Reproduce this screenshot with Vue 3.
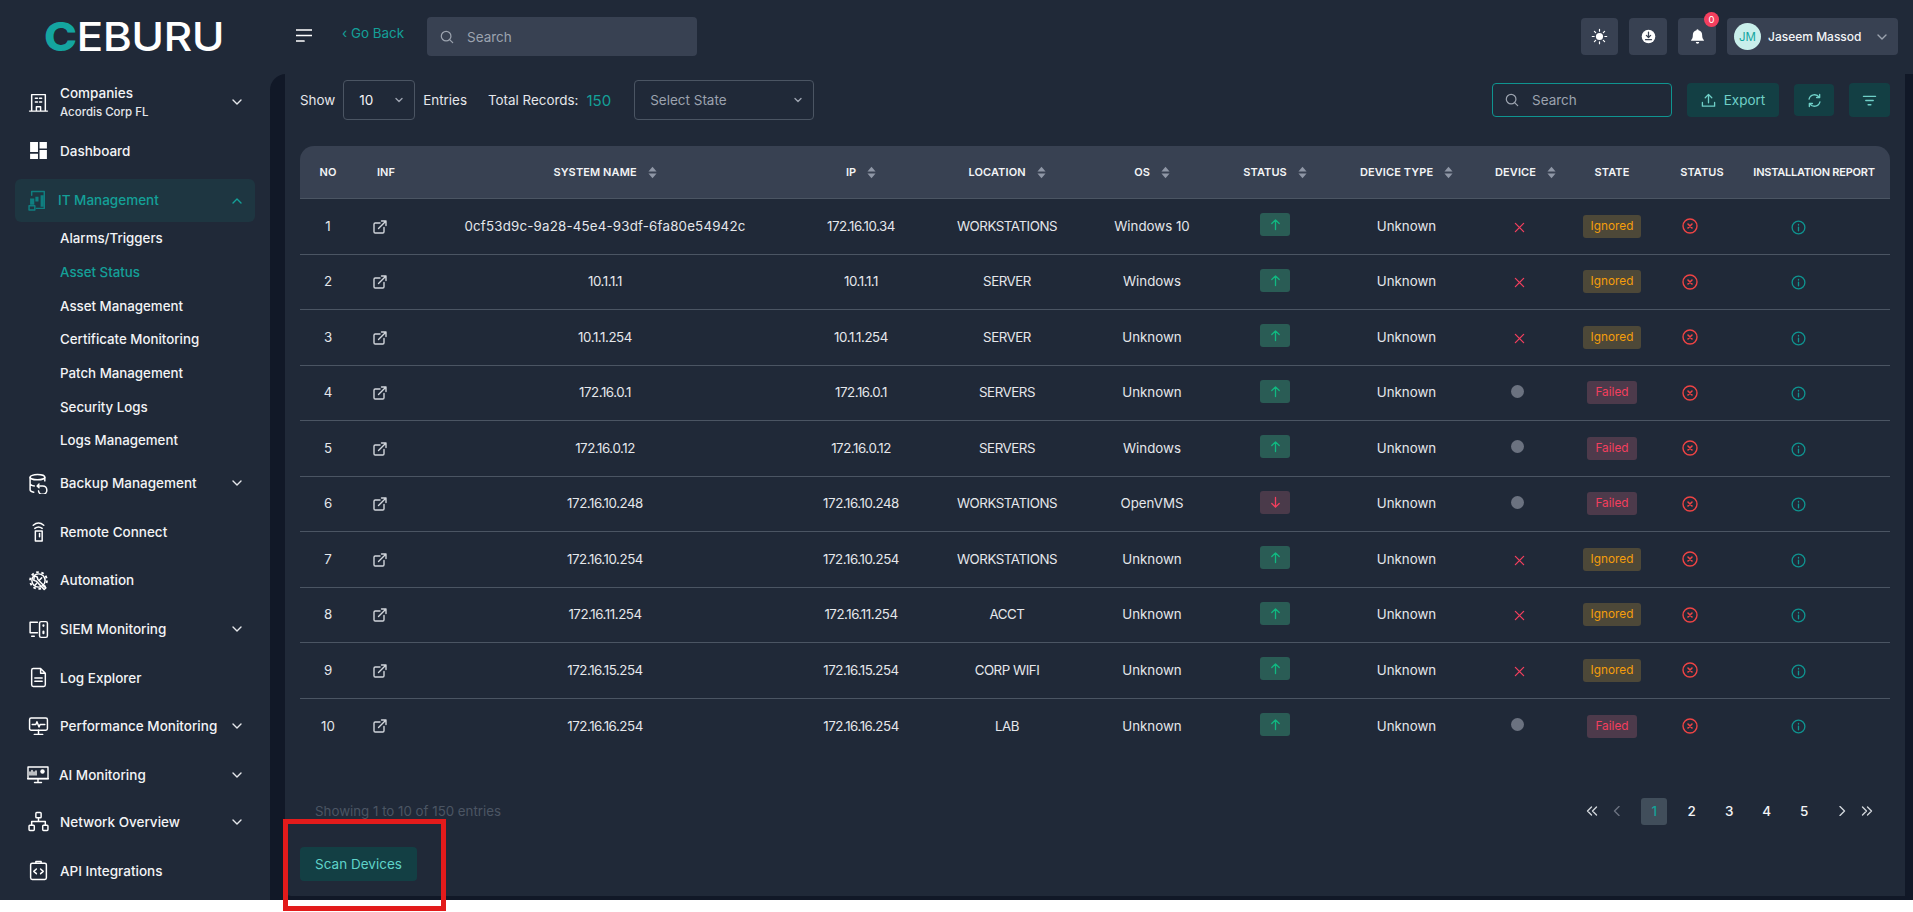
<script setup>
const subItems = ['Alarms/Triggers', 'Asset Status', 'Asset Management', 'Certificate Monitoring', 'Patch Management', 'Security Logs', 'Logs Management']
const rows = [
  { no: 1, name: '0cf53d9c-9a28-45e4-93df-6fa80e54942c', ip: '172.16.10.34', loc: 'WORKSTATIONS', os: 'Windows 10', up: true, ok: false },
  { no: 2, name: '10.1.1.1', ip: '10.1.1.1', loc: 'SERVER', os: 'Windows', up: true, ok: false },
  { no: 3, name: '10.1.1.254', ip: '10.1.1.254', loc: 'SERVER', os: 'Unknown', up: true, ok: false },
  { no: 4, name: '172.16.0.1', ip: '172.16.0.1', loc: 'SERVERS', os: 'Unknown', up: true, ok: true },
  { no: 5, name: '172.16.0.12', ip: '172.16.0.12', loc: 'SERVERS', os: 'Windows', up: true, ok: true },
  { no: 6, name: '172.16.10.248', ip: '172.16.10.248', loc: 'WORKSTATIONS', os: 'OpenVMS', up: false, ok: true },
  { no: 7, name: '172.16.10.254', ip: '172.16.10.254', loc: 'WORKSTATIONS', os: 'Unknown', up: true, ok: false },
  { no: 8, name: '172.16.11.254', ip: '172.16.11.254', loc: 'ACCT', os: 'Unknown', up: true, ok: false },
  { no: 9, name: '172.16.15.254', ip: '172.16.15.254', loc: 'CORP WIFI', os: 'Unknown', up: true, ok: false },
  { no: 10, name: '172.16.16.254', ip: '172.16.16.254', loc: 'LAB', os: 'Unknown', up: true, ok: true },
]
const colWidths = [56, 60, 378, 134, 158, 132, 114, 149, 89, 84, 96, 140]
const heads = [
  { t: 'NO' }, { t: 'INF' }, { t: 'SYSTEM NAME', s: 1 }, { t: 'IP', s: 1 }, { t: 'LOCATION', s: 1 }, { t: 'OS', s: 1 },
  { t: 'STATUS', s: 1 }, { t: 'DEVICE TYPE', s: 1 }, { t: 'DEVICE', s: 1 }, { t: 'STATE' }, { t: 'STATUS' }, { t: 'INSTALLATION REPORT' },
]
const pages = [1, 2, 3, 4, 5]
</script>

<template>
  <div class="screen">
  <div class="app">
    <aside class="sidebar">
      <div class="logo"><div class="logo-text"><span class="logo-c">C</span>EBURU</div></div>
      <nav class="nav">
        <div class="item">
          <svg class="ico" viewBox="0 0 20 20"><path d="M3.500 18V2.500h13V18M1.500 18.200h17M8 18v-4h4v4M7 6h2M11 6h2M7 9.500h2M11 9.500h2" /></svg>
          <div class="two"><span>Companies</span><small>Acordis Corp FL</small></div>
          <svg class="chev" viewBox="0 0 12 12"><path d="M2 4l4 4 4-4" /></svg>
        </div>
        <div class="item">
          <svg class="ico" viewBox="0 0 20 20"><path class="fill" d="M2 2h7.500v9.500H2zM11 2h7v6h-7zM2 13h7.500v5H2zM11 9.500h7V18h-7z" /></svg>
          <span class="lbl">Dashboard</span>
        </div>
        <div class="item active">
          <svg class="ico teal" viewBox="0 0 20 20"><path d="M3.500 5V1.500h12v16H8" /><path class="tfill" d="M2 8h4v6H2zM7 6.500h3V11H7zM12 5h3v11h-3z" /><path d="M1 15h5.500v4H1z" /></svg>
          <span class="lbl">IT Management</span>
          <svg class="chev" viewBox="0 0 12 12"><path d="M2 8l4-4 4 4" /></svg>
        </div>
        <ul class="sub">
          <li v-for="s in subItems" :key="s" :class="{ cur: s === 'Asset Status' }">{{ s }}</li>
        </ul>
        <div class="item">
          <svg class="ico" viewBox="0 0 20 20"><ellipse cx="9" cy="4" rx="7" ry="2.500" /><path d="M2 4v12c0 1.200 1.500 2 3.500 2.300M16 4v3.500M2 10c0 1.200 1.800 2 4 2.300" /><path d="M10.500 10.500l-1.800 1.800 1.800 1.800M8.800 12.300h5.200a4 4 0 1 1-4 4.700" /></svg>
          <span class="lbl">Backup Management</span>
          <svg class="chev" viewBox="0 0 12 12"><path d="M2 4l4 4 4-4" /></svg>
        </div>
        <div class="item">
          <svg class="ico" viewBox="0 0 20 20"><path d="M5 4c3-2.500 7-2.500 10 0M6.500 7c2-1.500 5-1.500 7 0M7 9.500h6.500V19H7z" /><path d="M11 12v3" /></svg>
          <span class="lbl">Remote Connect</span>
        </div>
        <div class="item">
          <svg class="ico" viewBox="0 0 20 20"><circle cx="10" cy="10" r="6.300" /><circle class="teeth" cx="10" cy="10" r="8" /><path d="M6 5.500l2.800 1.200.6 2.300 7.600 8-1.600 1.500-7.600-7.900-2.300-.7z" /><path d="M13 7.500l-2 2M8 13l-1.500 1.500" /></svg>
          <span class="lbl">Automation</span>
        </div>
        <div class="item">
          <svg class="ico" viewBox="0 0 20 20"><path d="M9 3H2v10h7M3.500 16.500H6" /><rect x="11" y="2.500" width="7.500" height="15" rx="1.500" /><path d="M14.700 6v.5M14.700 12v1.500" class="thick" /></svg>
          <span class="lbl">SIEM Monitoring</span>
          <svg class="chev" viewBox="0 0 12 12"><path d="M2 4l4 4 4-4" /></svg>
        </div>
        <div class="item">
          <svg class="ico" viewBox="0 0 20 20"><path d="M12 1.500H5a1.500 1.500 0 0 0-1.500 1.500v14A1.500 1.500 0 0 0 5 18.500h10a1.500 1.500 0 0 0 1.500-1.500V6zM12 1.500V6h4.500M6.500 10.500h7M6.500 13.500h7" /></svg>
          <span class="lbl">Log Explorer</span>
        </div>
        <div class="item">
          <svg class="ico" viewBox="0 0 20 20"><rect x="1.500" y="2" width="17" height="11.500" rx="1.500" /><path d="M4 8h3.500l1-2.500 2 5 1-2.500H16M10 13.500v4M6 17.500h8" /></svg>
          <span class="lbl">Performance Monitoring</span>
          <svg class="chev" viewBox="0 0 12 12"><path d="M2 4l4 4 4-4" /></svg>
        </div>
        <div class="item ai">
          <svg class="ico wide" viewBox="0 0 22 18"><rect x="1" y="1" width="20" height="11.500" /><path d="M.5 12.800h21M11 13v3M7.500 16.500h7M3 9V6M5 9V4.500M7 9V6M9 9V5" /><circle class="fill" cx="15.500" cy="5.500" r="2.200" /></svg>
          <span class="lbl">AI Monitoring</span>
          <svg class="chev" viewBox="0 0 12 12"><path d="M2 4l4 4 4-4" /></svg>
        </div>
        <div class="item net">
          <svg class="ico" viewBox="0 0 20 20"><rect x="7.500" y="1.500" width="5" height="5" rx=".8" /><rect x="1" y="13.500" width="5" height="5" rx=".8" /><rect x="14" y="13.500" width="5" height="5" rx=".8" /><path d="M10 6.500V10M3.500 13.500V10h13v3.500" /></svg>
          <span class="lbl">Network Overview</span>
          <svg class="chev" viewBox="0 0 12 12"><path d="M2 4l4 4 4-4" /></svg>
        </div>
        <div class="item">
          <svg class="ico" viewBox="0 0 20 20"><rect x="2.500" y="3" width="15" height="15.500" rx="1.500" /><path d="M7.500 3V1.500h5V3M8 8.500l-2.500 2.300L8 13M12 8.500l2.500 2.300L12 13" /></svg>
          <span class="lbl">API Integrations</span>
        </div>
      </nav>
    </aside>

    <div class="main">
      <header class="topbar">
        <svg class="burger" viewBox="0 0 16 14"><path d="M0 1h16M0 6.500h16M0 12h8" /></svg>
        <a class="back">‹ Go Back</a>
        <div class="top-search">
          <svg class="search-ico" viewBox="0 0 16 16"><circle cx="7" cy="7" r="5.500" /><path d="M11 11l3.500 3.500" /></svg>
          <span>Search</span>
        </div>
        <div class="top-right">
          <button class="tbtn b1">
            <svg class="tsvg" viewBox="0 0 20 20"><circle class="white" cx="10" cy="10" r="4.200" /><path d="M10 1.500v2.200M10 16.300v2.200M1.500 10h2.200M16.300 10h2.200M4 4l1.500 1.500M14.500 14.500L16 16M4 16l1.500-1.500M14.500 5.500L16 4" /></svg>
          </button>
          <button class="tbtn b2">
            <svg class="tsvg nost" viewBox="0 0 20 20"><circle class="white" cx="10" cy="10" r="8" /><path class="dk" d="M10 5v6M7.500 8.700L10 11.200l2.500-2.500M6.500 13.800h7" /></svg>
          </button>
          <button class="tbtn b3">
            <svg class="tsvg nost" viewBox="0 0 20 20"><path class="white" d="M10 1.500a1.200 1.200 0 0 1 1.200 1.200c3 .6 4.300 2.900 4.300 5.800 0 3 .8 4.500 2 5.500v1H2.500v-1c1.200-1 2-2.500 2-5.500 0-2.900 1.300-5.200 4.300-5.800A1.200 1.200 0 0 1 10 1.500zM8 16.500h4a2 2 0 0 1-4 0z" /></svg>
            <span class="badge">0</span>
          </button>
          <div class="user">
            <span class="avatar">JM</span>
            <span class="uname">Jaseem Massod</span>
            <svg class="uchev" viewBox="0 0 12 12"><path d="M2 4l4 4 4-4" /></svg>
          </div>
        </div>
      </header>

      <div class="stage">
        <section class="panel">
          <div class="toolbar">
            <span class="lab">Show</span>
            <div class="sel sel-num"><span>10</span><svg viewBox="0 0 12 12"><path d="M3 4.500l3 3 3-3" /></svg></div>
            <span class="lab">Entries</span>
            <span class="lab total">Total Records:</span>
            <span class="count">150</span>
            <div class="sel sel-state"><span>Select State</span><svg viewBox="0 0 12 12"><path d="M3 4.500l3 3 3-3" /></svg></div>
            <div class="tsearch">
              <svg class="search-ico" viewBox="0 0 16 16"><circle cx="7" cy="7" r="5.500" /><path d="M11 11l3.500 3.500" /></svg>
              <span>Search</span>
            </div>
            <button class="act export">
              <svg viewBox="0 0 16 16"><path d="M1.500 10v4h13v-4M8 10.500V2M4.500 5L8 1.500 11.500 5" /></svg>
              <span>Export</span>
            </button>
            <button class="act refresh">
              <svg viewBox="0 0 16 16"><path d="M2.200 6.500A6 6 0 0 1 13 4.500M13.800 9.500A6 6 0 0 1 3 11.500M13.500 1.500v3.300h-3.300M2.500 14.500v-3.300h3.300" /></svg>
            </button>
            <button class="act filter">
              <svg viewBox="0 0 16 16"><path d="M1.500 3.500h13M4 8h8M6.500 12.500h3" /></svg>
            </button>
          </div>

          <table class="grid">
            <colgroup>
              <col v-for="(w, i) in colWidths" :key="i" :style="{ width: w + 'px' }" />
            </colgroup>
            <thead>
              <tr>
                <th v-for="(h, i) in heads" :key="i">
                  {{ h.t }}
                  <svg v-if="h.s" class="sort" viewBox="0 0 10 14"><path d="M5 .5L9.500 6H.5z" /><path d="M5 13.500L.5 8h9z" /></svg>
                </th>
              </tr>
            </thead>
            <tbody>
              <tr v-for="r in rows" :key="r.no">
                <td>{{ r.no }}</td>
                <td class="inf">
                  <svg class="ext" viewBox="0 0 14 14"><path d="M7 3H2.200A1.200 1.200 0 0 0 1 4.200v7.600A1.200 1.200 0 0 0 2.200 13h7.600a1.200 1.200 0 0 0 1.200-1.200V7.500M5.500 8.500L13 1M8.500 1H13v4.500" /></svg>
                </td>
                <td :class="r.no === 1 ? 'uuid' : 'tight'">{{ r.name }}</td>
                <td class="tight">{{ r.ip }}</td>
                <td class="loc">{{ r.loc }}</td>
                <td>{{ r.os }}</td>
                <td>
                  <span class="updown" :class="r.up ? 'up' : 'down'">
                    <svg viewBox="0 0 14 14"><path v-if="r.up" d="M7 12.500V2M3 6l4-4 4 4" /><path v-else d="M7 1.500V12M3 8l4 4 4-4" /></svg>
                  </span>
                </td>
                <td>Unknown</td>
                <td>
                  <span v-if="r.ok" class="dot"></span>
                  <svg v-else class="cross" viewBox="0 0 12 12"><path d="M1.500 1.500l9 9M10.500 1.500l-9 9" /></svg>
                </td>
                <td>
                  <span class="pill" :class="r.ok ? 'failed' : 'ignored'">{{ r.ok ? 'Failed' : 'Ignored' }}</span>
                </td>
                <td class="st">
                  <svg class="xc" viewBox="0 0 16 16"><circle cx="8" cy="8" r="7" /><path d="M6 6l4 4M10 6l-4 4" /></svg>
                </td>
                <td class="rep">
                  <svg class="info" viewBox="0 0 16 16"><circle cx="8" cy="8" r="6.800" /><path d="M8 7.500v4M8 4.800v.6" /></svg>
                </td>
              </tr>
            </tbody>
          </table>

          <div class="foot">
            <span class="showing">Showing 1 to 10 of 150 entries</span>
            <div class="pager">
              <span class="pg arrow"><svg viewBox="0 0 12 10"><path d="M5.500 1L1.500 5l4 4M10.500 1l-4 4 4 4" /></svg></span>
              <span class="pg arrow fade"><svg viewBox="0 0 12 10"><path d="M8 .5L3.500 5 8 9.500" /></svg></span>
              <span v-for="p in pages" :key="p" class="pg num" :class="{ on: p === 1 }">{{ p }}</span>
              <span class="pg arrow next"><svg viewBox="0 0 12 10"><path d="M4 .5L8.500 5 4 9.500" /></svg></span>
              <span class="pg arrow"><svg viewBox="0 0 12 10"><path d="M1.500 1l4 4-4 4M6.500 1l4 4-4 4" /></svg></span>
            </div>
          </div>

          <button class="scan">Scan Devices</button>
        </section>
      </div>
    </div>
    <div class="redbox"></div>
  </div>
  </div>
</template>

<style>
html, body { background: #fff; margin: 0; }
</style>

<style scoped>
.screen { height: 912px; background: #fff; overflow: hidden; }
.app {
  position: relative;
  display: flex;
  width: 1913px;
  height: 900px;
  background: #202938;
  color: #e5e7eb;
  font-family: Inter, "Noto Sans", sans-serif;
  font-size: 13.5px;
}
svg { fill: none; stroke: currentColor; stroke-width: 1.4; stroke-linecap: round; stroke-linejoin: round; }
button { font-family: inherit; border: 0; padding: 0; cursor: pointer; }

.sidebar { width: 270px; flex: none; overflow: hidden; }
.logo { height: 78px; padding: 13px 0 0 44px; box-sizing: border-box; }
.logo-text {
  width: max-content;
  font-size: 40px;
  line-height: 47px;
  font-weight: 500;
  letter-spacing: -.5px;
  color: #fff;
  transform: scaleX(1.11);
  transform-origin: left center;
}
.logo-c { color: #14a5a0; font-weight: 800; }
.nav { display: flex; flex-direction: column; }
.item {
  display: flex;
  align-items: center;
  height: 48.6px;
  flex: none;
  margin: 0 15px;
  padding: 0 12px 0 13px;
  font-size: 13.5px;
  color: #f3f4f6;
  font-weight: 500;
}
.ico { width: 21px; height: 21px; flex: none; margin-right: 11px; color: #fff; }
.ico .fill { fill: #fff; stroke: none; }
.ico .thick { stroke-width: 2; }
.ico .teeth { stroke-width: 1.800; stroke-dasharray: 2.500 2.527; stroke-linecap: butt; }
.ico.wide { width: 22px; height: 18px; margin-left: -1px; margin-right: 11px; }
.ico .tfill { fill: currentColor; stroke: none; }
.ico.teal { color: #0f7f80; }
.two { display: flex; flex-direction: column; gap: 2px; }
.two span { line-height: 17px; }
.two small { font-size: 11.5px; line-height: 16px; color: #e5e7eb; }
.lbl { white-space: nowrap; }
.chev { width: 12px; height: 12px; margin-left: auto; flex: none; color: #e5e7eb; }
.active { background: #1e3641; border-radius: 6px; color: #14a098; height: 43px; margin-top: 4px; }
.active .ico { margin-right: 9px; }
.active .lbl { margin-top: -2px; }
.active .chev { color: #14a098; }
.ai .lbl { margin-left: -1px; }
.net { margin-top: -1.500px; }
.sub { list-style: none; margin: 0 0 1px; padding: 0 0 0 60px; }
.sub li { height: 33.7px; line-height: 33.7px; font-size: 13.3px; font-weight: 500; color: #f3f4f6; }
.sub li.cur { color: #14a098; }

.main { flex: 1; min-width: 0; display: flex; flex-direction: column; }
.topbar { height: 74px; flex: none; display: flex; align-items: center; padding: 0 15px 1px 26px; box-sizing: border-box; }
.burger { width: 16px; height: 14px; color: #fff; stroke-width: 1.7; margin-top: -2px; }
.back { margin-left: 30px; color: #14a098; font-size: 13.4px; margin-top: -7px; }
.top-search {
  margin-left: 23px;
  width: 270px;
  height: 39px;
  background: #384152;
  border-radius: 4px;
  display: flex;
  align-items: center;
  padding-left: 13px;
  box-sizing: border-box;
  color: #9ca3af;
  gap: 13px;
  font-size: 13.5px;
}
.search-ico { width: 14px; height: 14px; color: #9ca3af; }
.top-right { margin-left: auto; display: flex; gap: 11px; align-items: center; }
.tbtn { position: relative; width: 37px; height: 37px; border-radius: 4px; background: #384152; display: flex; align-items: center; justify-content: center; color: #fff; }
.b2, .b3 { width: 38px; }
.tsvg { width: 17px; height: 17px; }
.tsvg .white { fill: #fff; stroke: none; }
.tsvg .dk { stroke: #384152; stroke-width: 1.5; }
.badge {
  position: absolute;
  top: -6px;
  right: -3px;
  width: 15px;
  height: 15px;
  border-radius: 50%;
  background: #f43f5e;
  color: #fff;
  font-size: 9.5px;
  line-height: 15px;
  text-align: center;
}
.user { width: 171px; height: 37px; background: #384152; border-radius: 4px; display: flex; align-items: center; padding: 0 10px 0 7px; box-sizing: border-box; }
.avatar { width: 27px; height: 27px; border-radius: 50%; background: #c9efeb; color: #14a5a0; font-size: 11.5px; display: flex; align-items: center; justify-content: center; flex: none; }
.uname { margin-left: 7px; font-size: 12px; font-weight: 500; color: #f3f4f6; white-space: nowrap; }
.uchev { width: 12px; height: 12px; margin-left: auto; color: #9ca3af; }

.stage { flex: 1; min-height: 0; background: #111827; border-radius: 16px 0 0 0; padding: 0 8px 4px 15px; display: flex; }
.panel { flex: 1; background: #202938; border-radius: 0 0 0 6px; padding: 6px 15px 0; display: flex; flex-direction: column; align-items: stretch; }

.toolbar { display: flex; align-items: center; height: 40px; flex: none; }
.lab { color: #e5e7eb; font-size: 13.4px; white-space: nowrap; }
.sel { height: 40px; border: 1px solid #4b5563; border-radius: 4px; box-sizing: border-box; display: flex; align-items: center; justify-content: space-between; }
.sel svg { width: 12px; height: 12px; color: #9ca3af; }
.sel-num { width: 72px; margin: 0 8px 0 8px; padding: 0 9px 0 15px; color: #f3f4f6; }
.total { margin-left: 21px; }
.count { margin-left: 8px; color: #14a098; font-size: 15px; }
.sel-state { width: 180px; margin-left: 23px; padding: 0 9px 0 15px; color: #9ca3af; }
.tsearch {
  margin-left: auto;
  width: 180px;
  height: 34px;
  border: 1px solid #0f9490;
  border-radius: 4px;
  box-sizing: border-box;
  display: flex;
  align-items: center;
  padding-left: 12px;
  gap: 13px;
  color: #9ca3af;
}
.act { background: #133f44; color: #6fd0c8; border-radius: 4px; height: 34px; display: flex; align-items: center; justify-content: center; font-size: 13.5px; }
.act svg { width: 15px; height: 15px; }
.export { width: 92px; margin-left: 15px; gap: 8px; }
.refresh { width: 40px; height: 32px; margin-left: 15px; }
.filter { width: 41px; margin-left: 15px; }

.grid { width: 1590px; table-layout: fixed; border-collapse: collapse; margin-top: 26px; flex: none; }
th {
  height: 52.500px;
  padding: 0;
  background: #384152;
  color: #f3f4f6;
  font-size: 11px;
  font-weight: 600;
  white-space: nowrap;
  border-bottom: 1px solid #4b5563;
  box-sizing: border-box;
  letter-spacing: .1px;
}
th:first-child { border-top-left-radius: 14px; }
th:last-child { border-top-right-radius: 14px; padding-right: 12px; letter-spacing: -.25px; }
.sort { width: 9px; height: 13px; margin-left: 8px; vertical-align: -3px; fill: #8f97a6; stroke: none; }
td { height: 55.500px; padding: 0 0 1px; text-align: center; font-size: 13.3px; color: #e5e7eb; border-bottom: 1px solid #4b5563; box-sizing: border-box; vertical-align: middle; white-space: nowrap; }
tbody tr:last-child td { border-bottom: 0; }
td svg { vertical-align: middle; }
td.tight { letter-spacing: -.45px; }
td.uuid { letter-spacing: .2px; }
td.loc { letter-spacing: -.45px; }
td.inf { padding-right: 12px; }
.ext { width: 14px; height: 14px; color: #d1d5db; margin-top: -1px; }
.updown { display: inline-flex; width: 30px; height: 23px; border-radius: 3px; align-items: center; justify-content: center; margin-top: -2px; }
.updown svg { width: 13px; height: 13px; }
.up { background: #2a5c55; color: #10b981; }
.down { background: #4a3a4a; color: #f43f5e; }
.dot { display: inline-block; width: 13px; height: 13px; border-radius: 50%; background: #6b7280; margin-right: 17px; margin-top: -5px; vertical-align: middle; }
.cross { width: 11px; height: 11px; color: #f43f5e; margin-right: 13px; margin-top: 0; }
.pill { display: inline-block; height: 23px; line-height: 23px; padding: 0 8px; border-radius: 3px; font-size: 11.8px; margin-top: 1px; }
.ignored { background: #4d4838; color: #f59e0b; }
.failed { background: #4d3a4b; color: #f43f5e; }
td.st { padding-right: 24px; }
.xc { width: 16px; height: 16px; color: #ef4444; }
.xc path { stroke-width: 1.6; }
td.rep { padding-right: 44px; }
.info { width: 15px; height: 15px; color: #0f9490; margin-top: 2px; }

.foot { display: flex; align-items: center; justify-content: space-between; height: 27px; margin-top: 44px; flex: none; }
.showing { margin-left: 15px; color: #4b5563; font-size: 13.3px; }
.pager { display: flex; align-items: center; margin-right: 11px; height: 27px; }
.pg { display: flex; align-items: center; justify-content: center; font-size: 13.5px; }
.num { width: 26px; height: 27px; margin: 0 5.750px; color: #f3f4f6; font-weight: 500; border-radius: 3px; }
.num.on { background: #414e5b; color: #14a098; }
.arrow { width: 25px; height: 27px; color: #d1d5db; }
.arrow svg { width: 12px; height: 10px; }
.fade { color: #6b7280; margin-right: 6px; }
.next { margin-left: 6px; }
.scan {
  align-self: flex-start;
  width: 117px;
  height: 34px;
  margin-top: 22px;
  background: #133f44;
  color: #5fd3c9;
  border-radius: 4px;
  font-size: 13.5px;
}
.redbox {
  position: absolute;
  left: 283px;
  top: 819px;
  width: 163px;
  height: 92px;
  border: 5px solid #e31b1b;
  box-sizing: border-box;
}
</style>
